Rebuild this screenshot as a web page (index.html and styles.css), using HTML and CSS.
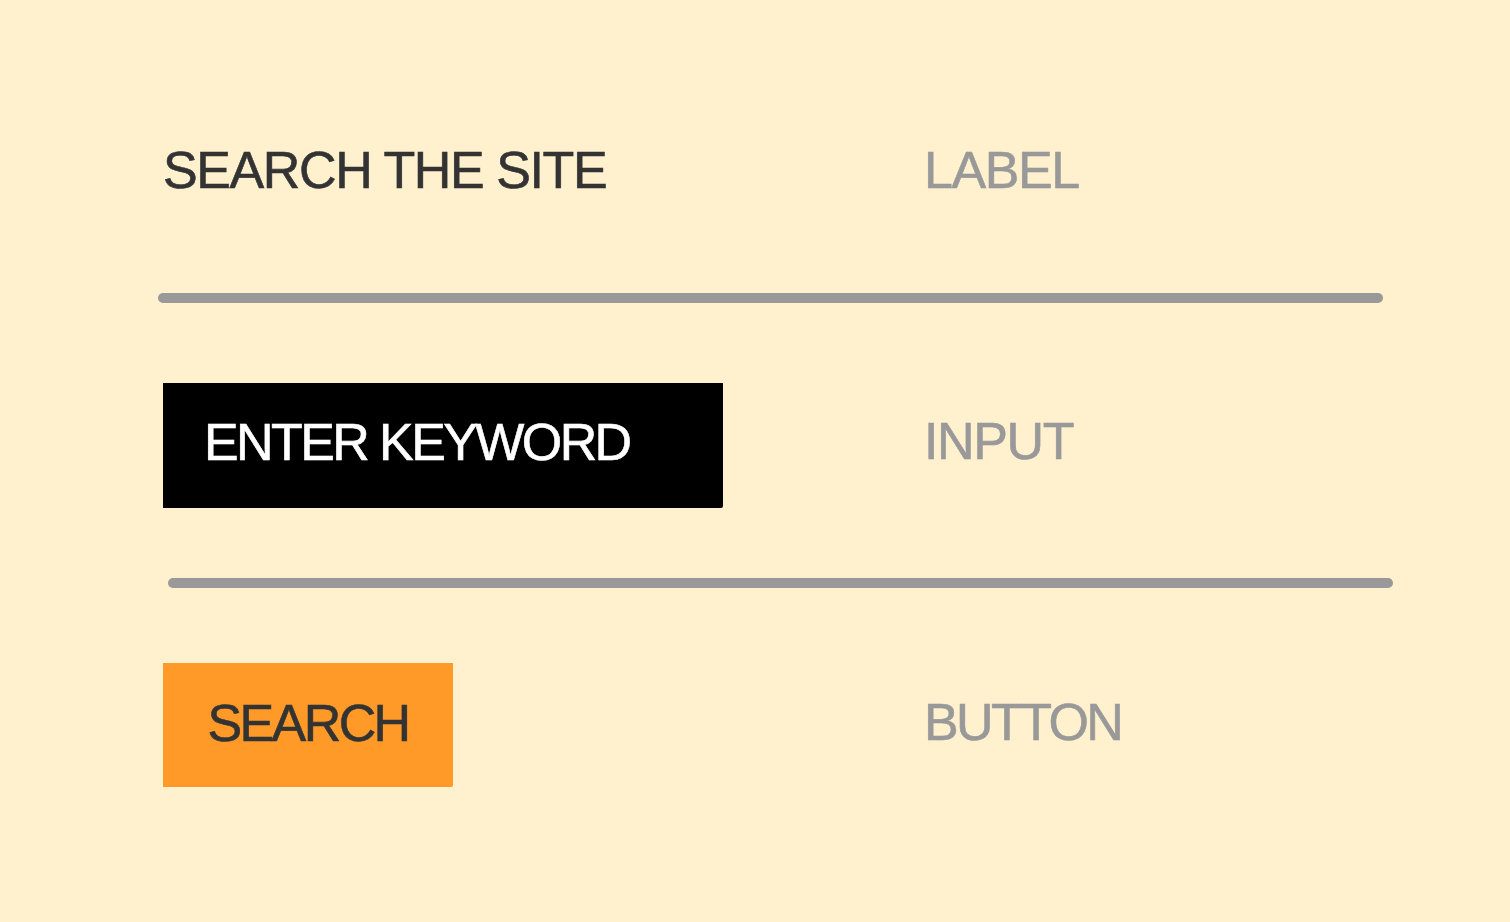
FILE: index.html
```html
<!DOCTYPE html>
<html lang="en">
<head>
<meta charset="utf-8">
<title>Search the site</title>
<link rel="stylesheet" href="styles.css">
</head>
<body>
<main class="sheet">
  <section class="row row-label">
    <div class="cell"><span class="caption caption-dark">SEARCH THE SITE</span></div>
    <div class="cell"><span class="caption caption-muted">LABEL</span></div>
  </section>
  <hr class="rule rule-1">
  <section class="row row-input">
    <div class="cell"><div class="field"><span class="caption caption-light caption-tight">ENTER KEYWORD</span></div></div>
    <div class="cell cell-raise"><span class="caption caption-muted">INPUT</span></div>
  </section>
  <hr class="rule rule-2">
  <section class="row row-button">
    <div class="cell"><button class="btn" type="button"><span class="caption caption-dark caption-tight">SEARCH</span></button></div>
    <div class="cell cell-raise-sm"><span class="caption caption-muted caption-tight">BUTTON</span></div>
  </section>
</main>
</body>
</html>
```
FILE: styles.css
```css
html, body {
  margin: 0;
  padding: 0;
}
body {
  background: #FFF0CE;
  font-family: "Liberation Sans", Arial, sans-serif;
  width: 1510px;
  height: 922px;
  overflow: hidden;
}
.sheet {
  padding: 142px 0 0 163px;
}
.row {
  display: grid;
  grid-template-columns: 761px auto;
  align-items: center;
}
.cell {
  display: flex;
  align-items: center;
}
.cell-raise {
  padding-bottom: 10px;
}
.cell-raise-sm {
  padding-bottom: 6px;
}
.caption {
  font-family: "Liberation Sans", Arial, sans-serif;
  font-size: 52px;
  line-height: 56px;
  letter-spacing: -1.4px;
  white-space: nowrap;
  -webkit-text-stroke: 0.6px currentColor;
}
.caption-tight {
  letter-spacing: -2.6px;
}
.caption-dark { color: #333333; }
.caption-muted { color: #999999; }
.caption-light { color: #ffffff; }
.row-label {
  height: 56px;
}
.rule {
  border: 0;
  height: 10px;
  width: 1225px;
  border-radius: 5px;
  background: #999999;
}
.rule-1 {
  margin: 95px 0 0 -5px;
}
.rule-2 {
  margin: 70px 0 0 5px;
}
.row-input {
  margin-top: 80px;
}
.field {
  box-sizing: border-box;
  width: 560px;
  height: 125px;
  background: #000000;
  border-radius: 0 0 2px 0;
  padding: 0 0 8px 41px;
  display: flex;
  align-items: center;
}
.row-button {
  margin-top: 75px;
}
.btn {
  box-sizing: border-box;
  height: 124px;
  width: 290px;
  border: 0;
  margin: 0;
  padding: 0 0 4px 0;
  background: #FF9A29;
  border-radius: 0 0 2px 0;
  display: flex;
  align-items: center;
  justify-content: center;
  cursor: pointer;
}
```
